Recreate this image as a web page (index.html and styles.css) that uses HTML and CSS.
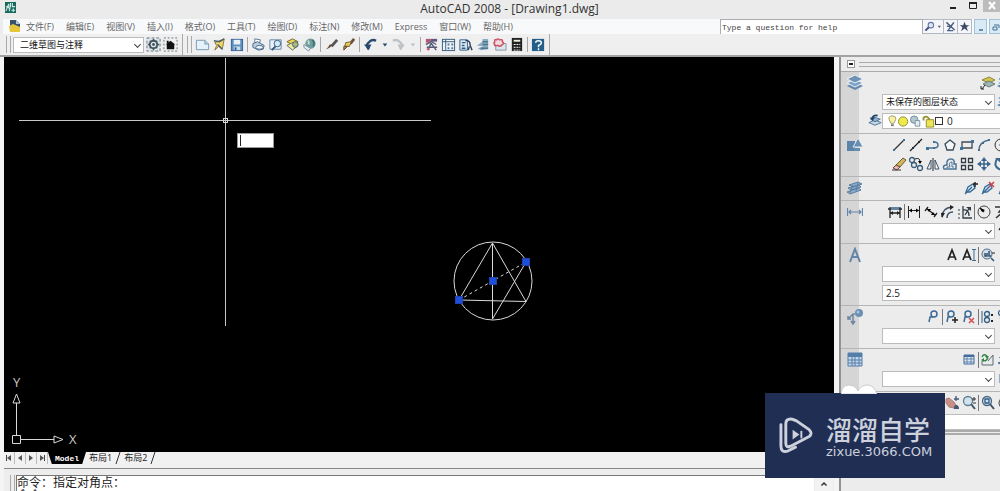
FILE: index.html
```html
<!DOCTYPE html>
<html lang="zh-CN">
<head>
<meta charset="utf-8">
<title>AutoCAD 2008 - [Drawing1.dwg]</title>
<link rel="stylesheet" href="styles.css">
</head>
<body>
<svg class="defs" aria-hidden="true">
  <symbol id="gear" viewBox="0 0 16 16"><rect x="1" y="1" width="14" height="14" fill="#dde6ea" stroke="#64747c" stroke-dasharray="3 2"/><circle cx="8" cy="8" r="4" fill="none" stroke="#40525e" stroke-width="2"/><circle cx="8" cy="8" r="1.5" fill="#40525e"/><path d="M8 2v2M8 12v2M2 8h2M12 8h2M4 4l1 1M11 11l1 1M12 4l-1 1M4 12l1-1" stroke="#40525e" stroke-width="1.5"/></symbol>
  <symbol id="home" viewBox="0 0 16 16"><rect x="1" y="1" width="14" height="14" fill="none" stroke="#64747c" stroke-dasharray="2 2"/><path d="M3 8L8 4L13 8H12V13H4V8Z" fill="#111"/><path d="M4 4h2v3H4z" fill="#111"/></symbol>
  <symbol id="new" viewBox="0 0 16 16"><path d="M1.500 3.500H10.500L14.500 7.500V13.500H1.500Z" fill="#e6f2fa" stroke="#7899b4"/><path d="M10.500 3.500V7.500H14.500" fill="#bcd2e2" stroke="#7899b4"/></symbol>
  <symbol id="open" viewBox="0 0 16 16"><path d="M3 6L13 2L11 13L7 10L3 14L5 9Z" fill="#f0d66a" stroke="#8b7430"/><path d="M2 4L8 5L13 2M6 8L11 13" fill="none" stroke="#48616f" stroke-width="1.500"/></symbol>
  <symbol id="save" viewBox="0 0 16 16"><rect x="2.500" y="2.500" width="12" height="12" fill="#5d8fc1" stroke="#345f91"/><rect x="5" y="3" width="7" height="5" fill="#e6f1f8"/><path d="M5 10h7v4H5z" fill="#c6dcec"/><path d="M6 11h2v3H6z" fill="#345f91"/></symbol>
  <symbol id="print" viewBox="0 0 16 16"><path d="M4 2L10 3L9 7L4 6Z" fill="#fff" stroke="#577797"/><path d="M2 7L7 5L14 9L13 13L8 14L2 11Z" fill="#bdcedc" stroke="#46688b"/><ellipse cx="9" cy="11" rx="4" ry="2" fill="#eef5fa" stroke="#46688b"/></symbol>
  <symbol id="preview" viewBox="0 0 16 16"><path d="M2 3h12v10H2z" fill="#e9f2f8" stroke="#6284a5"/><circle cx="10" cy="7" r="3.500" fill="#d0e8f8" stroke="#38597b"/><path d="M8 10L4 14" stroke="#38597b" stroke-width="2"/></symbol>
  <symbol id="publish" viewBox="0 0 16 16"><path d="M2 5L8 2L14 5L9 9Z" fill="#ead450" stroke="#746428"/><path d="M2 9L8 6L14 9L8 14Z" fill="#f0e6a6" stroke="#5f6d55"/><circle cx="11" cy="8" r="3" fill="#aab97d" stroke="#425e71"/></symbol>
  <symbol id="globe" viewBox="0 0 16 16"><circle cx="9" cy="7" r="5.500" fill="#6d9d9d"/><path d="M6 4Q8 5 7 8" stroke="#c2dbc8" fill="none" stroke-width="2"/><path d="M11 3Q14 6 12 10" stroke="#3f7477" fill="none" stroke-width="2"/><path d="M2 8L9 12L7 15L2 11Z" fill="#e8eff3" stroke="#7990a0"/></symbol>
  <symbol id="brush" viewBox="0 0 16 16"><path d="M14 3L8 10" stroke="#555" stroke-width="3"/><path d="M9 8Q7 12 2 13Q5 11 6 8Z" fill="#684b32"/></symbol>
  <symbol id="match" viewBox="0 0 16 16"><path d="M14 2L10 7" stroke="#6b533a" stroke-width="3"/><path d="M5 6L11 5L9 10L4 10Z" fill="#eac957" stroke="#735d2e"/><path d="M3 10L7 10L3 14Z" fill="#b58c31" stroke="#60502c"/></symbol>
  <symbol id="undo" viewBox="0 0 16 16"><path d="M6 13Q2 8 7 5Q10 2 14 4" fill="none" stroke="currentColor" stroke-width="2.500"/><path d="M1 8L9 8L6 14Z" fill="currentColor"/></symbol>
  <symbol id="redo" viewBox="0 0 16 16"><path d="M10 13Q14 8 9 5Q6 2 2 4" fill="none" stroke="currentColor" stroke-width="2.500"/><path d="M15 8L7 8L10 14Z" fill="currentColor"/></symbol>
  <symbol id="down" viewBox="0 0 8 16"><path d="M2 7h5L4.500 10Z" fill="currentColor"/></symbol>
  <symbol id="props" viewBox="0 0 16 16"><path d="M2 2h5v4H2z" fill="#b65575"/><path d="M7 2h7v3H7z" fill="#625580"/><path d="M2 8L8 5L13 8M8 6L4 14M8 7L13 14M3 11H14" fill="none" stroke="#555c76" stroke-width="1.500"/><path d="M3 13h3" stroke="#cf5b73" stroke-width="2"/></symbol>
  <symbol id="design" viewBox="0 0 16 16"><rect x="1.500" y="2.500" width="13" height="12" fill="#edf4f7" stroke="#365b7c"/><path d="M1 5h14M5 3v11" stroke="#365b7c"/><path d="M7 7h2v2H7zM11 7h2v2h-2zM7 11h2v2H7zM11 11h2v2h-2zM2 7h2M2 10h2" fill="#52799a"/></symbol>
  <symbol id="tool" viewBox="0 0 16 16"><path d="M2 3h8v11H2z" fill="#e1edf5" stroke="#315b86"/><path d="M4 6h4M4 9h3M4 12h4" stroke="#315b86" stroke-width="1.500"/><path d="M8 4Q13 3 13 9L15 14M12 10L11 14" stroke="#263f5e" stroke-width="1.500" fill="none"/></symbol>
  <symbol id="sheet" viewBox="0 0 16 16"><path d="M2 9L8 5V2H14V13L6 14L3 12L9 10Z" fill="#8bacc3"/><path d="M8 5h6M8 8h6M6 12h8" stroke="#537791" stroke-width="1.500"/></symbol>
  <symbol id="markup" viewBox="0 0 16 16"><path d="M4 7h11v7H4z" fill="#dce5eb" stroke="#8195a6"/><path d="M3 5Q2 2 5 3Q6 1 8 3Q12 2 11 5Q14 7 11 8Q9 11 6 9Q2 10 3 8Q1 7 3 5Z" fill="#f3d9de" stroke="#cb4e62" stroke-width="1.500"/></symbol>
  <symbol id="calc" viewBox="0 0 16 16"><rect x="3" y="1" width="11" height="14" fill="#222"/><path d="M5 3h7v2H5z" fill="#edf0df"/><path d="M5 8h7M5 11h7M5 14h7" stroke="#fff" stroke-dasharray="2 1"/></symbol>
  <symbol id="help" viewBox="0 0 16 16"><rect x="1" y="2" width="13" height="13" fill="#245e8a"/><path d="M5 6Q5 4 8 4Q11 4 11 6Q11 8 8 9V11M8 12v2" stroke="#fff" stroke-width="1.500" fill="none"/></symbol>
  <symbol id="search" viewBox="0 0 16 16"><circle cx="10" cy="6" r="4" fill="#dce7f4" stroke="#6675a0" stroke-width="1.500"/><path d="M7 9L2 14" stroke="#475483" stroke-width="3"/></symbol>
  <symbol id="comm" viewBox="0 0 16 16"><path d="M2 2L14 13M13 2L5 13M3 7Q8 10 12 3M3 14H12" fill="none" stroke="#4b5d82" stroke-width="2"/></symbol>
  <symbol id="star" viewBox="0 0 16 16"><path d="M8 1L10 6H15L11 9L13 15L8 11L3 15L5 9L1 6H6Z" fill="#3d4867"/></symbol>
  <symbol id="layers" viewBox="0 0 16 16"><path d="M0 11L8 7L16 11L8 15Z" fill="#6489ad"/><path d="M0 8L8 4L16 8L8 12Z" fill="#7da3c4" stroke="#edf2f6"/><path d="M0 4L8 0L16 4L8 8Z" fill="#6f93b5" stroke="#edf2f6"/></symbol>
  <symbol id="layeredit" viewBox="0 0 16 16"><path d="M2 5L9 2L15 5L9 8Z" fill="#d9c44a" stroke="#888747"/><path d="M3 9L9 6L15 9L9 12Z" fill="#9eb5b6" stroke="#648078"/><path d="M5 10L2 14M1 11V14H4" stroke="#222" fill="none"/></symbol>
  <symbol id="layerprev" viewBox="0 0 16 16"><path d="M1 11L8 8L15 11L8 14Z" fill="#c2d7e6" stroke="#426b91"/><path d="M3 7L8 5L14 7L8 10Z" fill="#94b4ce" stroke="#426b91"/><path d="M5 7Q5 2 11 3" fill="none" stroke="#234469" stroke-width="2"/><path d="M2 5H8L5 9Z" fill="#234469"/></symbol>
  <symbol id="shapes" viewBox="0 0 16 16"><path d="M0 4h8v10H0z" fill="#5c83aa"/><path d="M11 1L16 10H6Z" fill="#688eb5" stroke="#e5e8eb"/><path d="M7 11h6v3H7z" fill="#678dae"/></symbol>
  <symbol id="line" viewBox="0 0 16 16"><path d="M3 13L13 3" stroke="#333" stroke-width="1.300"/><path d="M2 12h2v2H2zM12 2h2v2h-2z" fill="#3b719b"/></symbol>
  <symbol id="xline" viewBox="0 0 16 16"><path d="M2 14L14 2" stroke="#222" stroke-width="1.300"/><path d="M4 10h2v2H4zM10 4h2v2h-2z" fill="#234"/></symbol>
  <symbol id="pline" viewBox="0 0 16 16"><path d="M2 11H9Q13 11 13 8Q13 5 9 5" fill="none" stroke="#4d7290" stroke-width="1.500"/><path d="M1 10h3v3H1zM8 10h2v2H8zM8 4h2v2H8z" fill="#3b719b"/></symbol>
  <symbol id="poly" viewBox="0 0 16 16"><path d="M8 3L13 7L11 13H5L3 7Z" fill="#f6f6f6" stroke="#384b5c" stroke-width="1.300"/></symbol>
  <symbol id="rect" viewBox="0 0 16 16"><path d="M3 5H13V11H3Z" fill="none" stroke="#404b56" stroke-width="1.300"/><path d="M1 10h3v3H1zM12 3h3v3h-3z" fill="#3b719b"/></symbol>
  <symbol id="arc" viewBox="0 0 16 16"><path d="M3 13Q3 5 13 3" fill="none" stroke="#4c6b84" stroke-width="1.500"/><path d="M2 12h2v2H2zM6 5h2v2H6zM12 2h2v2h-2z" fill="#3b719b"/></symbol>
  <symbol id="circle" viewBox="0 0 16 16"><circle cx="8" cy="8" r="6" fill="none" stroke="#333"/><path d="M8 8L12 4M7 7h2v2H7z" stroke="#3b719b"/></symbol>
  <symbol id="erase" viewBox="0 0 16 16"><path d="M12 2L15 4L9 11L5 9Z" fill="#d7b64d" stroke="#665b45"/><path d="M5 9L9 11L6 14L2 12Z" fill="#efb4a7" stroke="#654c47"/><path d="M1 14H10" stroke="#333"/></symbol>
  <symbol id="copy" viewBox="0 0 16 16"><circle cx="4" cy="4" r="2.500" fill="none" stroke="#385d7b" stroke-width="1.300"/><circle cx="6" cy="9" r="2.500" fill="none" stroke="#385d7b" stroke-width="1.300"/><circle cx="12" cy="12" r="2.500" fill="none" stroke="#385d7b" stroke-width="1.300"/><path d="M7 3Q12 1 12 6" stroke="#222" fill="none"/><path d="M10 5h4l-2 3z"/></symbol>
  <symbol id="mirror" viewBox="0 0 16 16"><path d="M6 4V13H2ZM10 4V13H14Z" fill="#f5f5f5" stroke="#3b5368"/><path d="M8 2V15" stroke="#222"/></symbol>
  <symbol id="offset" viewBox="0 0 16 16"><path d="M2 13Q0 9 5 9Q4 3 9 3Q13 3 12 8H14V13Z" fill="none" stroke="#4b7597" stroke-width="1.500"/><path d="M5 12V11H8Q6 6 10 6V11H12" fill="none" stroke="#4b7597"/></symbol>
  <symbol id="array" viewBox="0 0 16 16"><path d="M2.500 2.500h4v4h-4zM9.500 2.500h4v4h-4zM2.500 9.500h4v4h-4zM9.500 9.500h4v4h-4z" fill="#f5f5f5" stroke="#303b46" stroke-width="1.300"/></symbol>
  <symbol id="move" viewBox="0 0 16 16"><path d="M8 3V13M3 8H13" stroke="#3d678d" stroke-width="1.500"/><path d="M8 1L11 5H5ZM8 15L5 11H11ZM1 8L5 5V11ZM15 8L11 11V5Z" fill="#3d678d"/></symbol>
  <symbol id="rotate" viewBox="0 0 16 16"><path d="M4 3Q0 10 6 13Q12 15 13 9" fill="none" stroke="#3d678d" stroke-width="2"/><path d="M2 2H8V7Z" fill="#3d678d"/></symbol>
  <symbol id="block" viewBox="0 0 16 16"><path d="M2 5L11 2L15 4L6 7ZM1 8L12 5L14 7L4 10ZM0 12L11 8L14 10L3 14Z" fill="#8eacc7" stroke="#5a7ea2"/><path d="M6 5L3 13M11 3L9 11" stroke="#5a7ea2" fill="none"/></symbol>
  <symbol id="attadd" viewBox="0 0 16 16"><path d="M3 12L5 7L10 4L12 8L7 12Z" fill="#d9e9f4" stroke="#376b96" stroke-width="1.300"/><path d="M2 14L9 7" stroke="#376b96" stroke-width="1.500"/><path d="M12 2V7M10 4H15" stroke="#222" stroke-width="1.500"/></symbol>
  <symbol id="attdel" viewBox="0 0 16 16"><path d="M3 12L5 7L10 4L12 8L7 12Z" fill="#d9e9f4" stroke="#376b96" stroke-width="1.300"/><path d="M2 14L9 7" stroke="#376b96" stroke-width="1.500"/><path d="M9 2L14 7M14 2L9 7" stroke="#c74048" stroke-width="1.500"/></symbol>
  <symbol id="dimwide" viewBox="0 0 16 16"><path d="M.5 4V12M15.500 4V12M2 8H14M4 6L2 8L4 10M12 6L14 8L12 10" fill="none" stroke="#6186a7" stroke-width="1.200"/></symbol>
  <symbol id="dimquick" viewBox="0 0 16 16"><path d="M3 3V14M13 3V14M1 5H15M3 9H13" stroke="#222" stroke-width="1.300"/><path d="M4 3h8v3H4z" fill="#5f84a4"/><path d="M6 7L3 9L6 11M10 7L13 9L10 11" fill="#222"/></symbol>
  <symbol id="dimlin" viewBox="0 0 16 16"><path d="M2.500 2V14M13.500 2V14M3 6.500H13" stroke="#222"/><path d="M3 6.500L6 4.500V8.500ZM13 6.500L10 4.500V8.500Z"/></symbol>
  <symbol id="dimali" viewBox="0 0 16 16"><path d="M4 5L12 11M5 3L2 7M14 9L11 13" stroke="#222" stroke-width="1.300"/><path d="M4 5L8 5L6 8ZM12 11L8 11L10 8Z"/></symbol>
  <symbol id="dimarc" viewBox="0 0 16 16"><path d="M2 13Q2 4 12 3M7 14Q7 8 13 8" fill="none" stroke="#3b5267" stroke-width="1.500"/><path d="M10 1L14 3L10 6ZM1 9H5L2 14Z" fill="#222"/></symbol>
  <symbol id="dimord" viewBox="0 0 16 16"><path d="M6 2V14H15M6 6Q12 5 12 12M13 3L8 11" fill="none" stroke="#303b45" stroke-width="1.300"/><path d="M9 3h5v4z" fill="#303b45"/><path d="M1 6h2M1 10h2M1 14h2" stroke="#303b45"/></symbol>
  <symbol id="dimrad" viewBox="0 0 16 16"><circle cx="8" cy="8" r="6" fill="none" stroke="#444"/><path d="M8 8L4 4" stroke="#222" stroke-width="1.500"/><path d="M4 4L9 6L6 8Z"/></symbol>
  <symbol id="dimjog" viewBox="0 0 16 16"><path d="M2 3H10L6 8H10L3 14" fill="none" stroke="#333" stroke-width="1.500"/></symbol>
  <symbol id="bigA" viewBox="0 0 16 16"><path d="M3 15L8 2L13 15M5 10H11" fill="none" stroke="#6186a7" stroke-width="2"/></symbol>
  <symbol id="textA" viewBox="0 0 16 16"><path d="M4 13L8 3L12 13M5 10H11" fill="none" stroke="#222" stroke-width="1.700"/></symbol>
  <symbol id="textI" viewBox="0 0 16 16"><path d="M2 13L6 3L10 13M3 10H9" fill="none" stroke="#222" stroke-width="1.700"/><path d="M11 2.500H15M13 3V14M11 13.500H15" stroke="#3b6c94"/></symbol>
  <symbol id="find" viewBox="0 0 16 16"><circle cx="7" cy="7" r="5" fill="#d2dfeb" stroke="#526b84"/><path d="M5 6v3h2V6M9 4v5h2M11 11L14 14" fill="none" stroke="#34506b" stroke-width="1.500"/><path d="M12 6h3" stroke="#222"/></symbol>
  <symbol id="leaderbig" viewBox="0 0 16 16"><circle cx="12" cy="4" r="4" fill="#6b90b3"/><circle cx="11" cy="3" r="1.500" fill="#a8c3db"/><path d="M8 5H6L1 10M6 6V15M4 12L6 15L8 12M1 7V10H4" fill="none" stroke="#6b87a1" stroke-width="1.500"/></symbol>
  <symbol id="leader" viewBox="0 0 16 16"><circle cx="9" cy="5" r="3" fill="none" stroke="#3b6b95" stroke-width="1.500"/><path d="M8 8H5L4 13" fill="none" stroke="#3b6b95" stroke-width="1.500"/></symbol>
  <symbol id="leadadd" viewBox="0 0 16 16"><circle cx="7" cy="5" r="3" fill="none" stroke="#3b6b95" stroke-width="1.500"/><path d="M6 8H4L3 13" fill="none" stroke="#3b6b95" stroke-width="1.500"/><path d="M11 8V14M8 11H14" stroke="#222" stroke-width="1.500"/></symbol>
  <symbol id="leaddel" viewBox="0 0 16 16"><circle cx="7" cy="5" r="3" fill="none" stroke="#3b6b95" stroke-width="1.500"/><path d="M6 8H4L3 13" fill="none" stroke="#3b6b95" stroke-width="1.500"/><path d="M8 9L13 14M13 9L8 14" stroke="#d04f59" stroke-width="1.500"/></symbol>
  <symbol id="leadalign" viewBox="0 0 16 16"><path d="M2 2V14" stroke="#315f87"/><circle cx="7" cy="5" r="2.500" fill="none" stroke="#315f87" stroke-width="1.300"/><circle cx="7" cy="11" r="2.500" fill="none" stroke="#315f87" stroke-width="1.300"/><path d="M11 6h2M11 12h2" stroke="#222" stroke-width="2"/></symbol>
  <symbol id="table" viewBox="0 0 16 16"><path d="M1 1H15V14H1Z" fill="#c6d8e7" stroke="#547fa9"/><path d="M1 3H15" stroke="#547fa9" stroke-width="4"/><path d="M1 8H15M1 11H15M5 2V14M8 2V14M12 2V14" stroke="#547fa9"/></symbol>
  <symbol id="tablesm" viewBox="0 0 16 16"><path d="M3 3H13V12H3Z" fill="#e4edf5" stroke="#406b9b"/><path d="M3 4H13" stroke="#406b9b" stroke-width="2"/><path d="M3 7H13M3 10H13M6 4V12M10 4V12" stroke="#6086ad"/></symbol>
  <symbol id="update" viewBox="0 0 16 16"><path d="M2 9V13H13V3L8 9" fill="#e8ebec" stroke="#596b72"/><path d="M2 5Q4 1 7 4M8 6Q6 10 3 8" fill="none" stroke="#328446" stroke-width="1.500"/><path d="M5 4h4l-2 3zM1 8L4 6V10Z" fill="#328446"/></symbol>
  <symbol id="pan" viewBox="0 0 16 16"><path d="M2 4L5 3L10 7L12 10L10 13L5 12L2 8Z" fill="#c98f84" stroke="#a8807b"/><path d="M12 1V6M10 4H15" stroke="#455671" stroke-width="1.300"/><path d="M10 13Q10 10 12 10Q15 10 15 14H10Z" fill="#455671"/></symbol>
  <symbol id="zoomrt" viewBox="0 0 16 16"><circle cx="7" cy="6" r="4.500" fill="#d2e3ed" stroke="#617f94" stroke-width="1.300"/><path d="M10 9L14 14" stroke="#3a5368" stroke-width="2"/><path d="M11 4H15M13 2V6M12 8H15" stroke="#333"/></symbol>
  <symbol id="zoomwin" viewBox="0 0 16 16"><circle cx="7" cy="6" r="4.500" fill="#d2e3ed" stroke="#49667e" stroke-width="1.300"/><path d="M5 4h4v4H5z" fill="none" stroke="#315985" stroke-width="1.300"/><path d="M10 9L14 14" stroke="#3a5368" stroke-width="2"/></symbol>
</svg>

<header class="titlebar">
  <svg class="app-logo" viewBox="0 0 12 12"><path d="M0 0h12v12H0z" fill="#17695f"/><path d="M1 10L4 2L5 10M6 1V6M8 1V5H11M7 9H11M9 7V11M1 5L6 7" fill="none" stroke="#cfece1" stroke-width="1.200"/></svg>
  <h1>AutoCAD 2008 - [Drawing1.dwg]</h1>
  <div class="window-buttons">
    <button aria-label="最小化"><svg viewBox="0 0 10 10"><path d="M2 7H8" stroke="#222" stroke-width="2"/></svg></button>
    <button aria-label="最大化"><svg viewBox="0 0 10 10"><path d="M1.500 2.500H8.500V7.500H1.500Z" fill="none" stroke="#222"/><path d="M1 2H9" stroke="#222" stroke-width="2"/></svg></button>
    <button class="close" aria-label="关闭"><svg viewBox="0 0 10 10"><path d="M2 1L8 8M8 1L2 8" stroke="#fff" stroke-width="2"/></svg></button>
  </div>
</header>

<div class="menubar">
  <svg class="doc-icon" viewBox="0 0 12 14"><path d="M1 1H7L11 5V12H1Z" fill="#38536a"/><path d="M0 7L4 5L11 8V13H1Z" fill="#e6c63c"/><path d="M7 1V5H11Z" fill="#b8cad6"/></svg>
  <nav>
    <button>文件(F)</button><button>编辑(E)</button><button>视图(V)</button><button>插入(I)</button><button>格式(O)</button><button>工具(T)</button><button>绘图(D)</button><button>标注(N)</button><button>修改(M)</button><button>Express</button><button>窗口(W)</button><button>帮助(H)</button>
  </nav>
  <div class="infocenter">
    <input type="text" placeholder="Type a question for help" aria-label="Type a question for help">
    <button class="find" aria-label="搜索"><svg class="i12"><use href="#search"/></svg><svg class="drop"><use href="#down"/></svg></button>
    <button aria-label="通讯中心"><svg class="i12"><use href="#comm"/></svg></button>
    <button aria-label="收藏夹"><svg class="i12"><use href="#star"/></svg></button>
  </div>
  <div class="doc-buttons">
    <button aria-label="最小化图形"><svg viewBox="0 0 10 10"><path d="M3 8H7" stroke="#456f92" stroke-width="1.500"/></svg></button>
    <button aria-label="还原图形"><svg viewBox="0 0 10 10"><path d="M3 3H8V6M2 5H6V8H2Z" fill="none" stroke="#456f92"/></svg></button>
  </div>
</div>

<div class="toolbar">
  <div class="band workspace">
    <i class="grip"></i>
    <span class="combo"><select aria-label="工作空间"><option>二维草图与注释</option></select></span>
    <button aria-label="工作空间设置"><svg><use href="#gear"/></svg></button>
    <button aria-label="我的工作空间"><svg><use href="#home"/></svg></button>
  </div>
  <div class="band standard">
    <i class="grip"></i>
    <button aria-label="新建"><svg><use href="#new"/></svg></button>
    <button aria-label="打开"><svg><use href="#open"/></svg></button>
    <button aria-label="保存"><svg><use href="#save"/></svg></button>
    <i class="sep"></i>
    <button aria-label="打印"><svg><use href="#print"/></svg></button>
    <button aria-label="打印预览"><svg><use href="#preview"/></svg></button>
    <button aria-label="发布"><svg><use href="#publish"/></svg></button>
    <button aria-label="三维 DWF"><svg><use href="#globe"/></svg></button>
    <i class="sep"></i>
    <button aria-label="特性匹配"><svg><use href="#brush"/></svg></button>
    <button aria-label="块编辑器"><svg><use href="#match"/></svg></button>
    <i class="sep"></i>
    <button class="undo" aria-label="放弃"><svg><use href="#undo"/></svg></button>
    <button class="arrow undo" aria-label="放弃列表"><svg><use href="#down"/></svg></button>
    <button class="redo" aria-label="重做"><svg><use href="#redo"/></svg></button>
    <button class="arrow redo" aria-label="重做列表"><svg><use href="#down"/></svg></button>
    <i class="sep"></i>
    <button aria-label="特性"><svg><use href="#props"/></svg></button>
    <button aria-label="设计中心"><svg><use href="#design"/></svg></button>
    <button aria-label="工具选项板"><svg><use href="#tool"/></svg></button>
    <button aria-label="图纸集"><svg><use href="#sheet"/></svg></button>
    <button aria-label="标记集"><svg><use href="#markup"/></svg></button>
    <button aria-label="计算器"><svg><use href="#calc"/></svg></button>
    <i class="sep"></i>
    <button aria-label="帮助"><svg><use href="#help"/></svg></button>
  </div>
</div>

<main>
  <section class="workarea">
    <div class="canvas">
      <svg class="drawing" fill="none" stroke="#d8d8d8">
        <path d="M221.500 1V269M15 63.500H427" stroke="#c8c8c8"/>
        <rect x="219.500" y="61.500" width="4" height="4"/>
        <circle cx="489" cy="224" r="39"/>
        <path d="M488.500 186V262M488.500 186L455 243L522 244.500L488.500 186M522 205L488.500 262"/>
        <path d="M455 243L522 205" stroke-dasharray="3 3"/>
        <g fill="#1c4fdc" stroke="#2340a8"><rect x="451.500" y="239.500" width="7" height="7"/><rect x="485.500" y="220.500" width="7" height="7"/><rect x="518.500" y="201.500" width="7" height="7"/></g>
      </svg>
      <svg class="ucs" viewBox="0 0 80 80" fill="none" stroke="#d8d8d8">
        <path d="M12.500 31V63M17 67.500H50M8.500 63.500H16.500V71.500H8.500ZM12.500 22L9 31H16ZM59 67.500L50 64V71Z"/>
        <text x="9" y="15">Y</text><text x="65" y="72">X</text>
      </svg>
      <input class="dynamic-input" type="text" aria-label="动态输入"><i class="caret"></i>
    </div>
    <div class="tabs">
      <button class="step" aria-label="第一个"><svg viewBox="0 0 10 10"><path d="M2.500 2V8" stroke="#444"/><path d="M7 2V8L3 5Z" fill="#555"/></svg></button>
      <button class="step" aria-label="上一个"><svg viewBox="0 0 10 10"><path d="M7 2V8L3 5Z" fill="#555"/></svg></button>
      <button class="step" aria-label="下一个"><svg viewBox="0 0 10 10"><path d="M3 2V8L7 5Z" fill="#555"/></svg></button>
      <button class="step" aria-label="最后一个"><svg viewBox="0 0 10 10"><path d="M7.500 2V8" stroke="#444"/><path d="M3 2V8L7 5Z" fill="#555"/></svg></button>
      <button class="tab model">Model</button>
      <button class="tab">布局1</button>
      <svg class="slash" viewBox="0 0 6 12"><path d="M1 12L5 0" stroke="#333"/></svg>
      <button class="tab">布局2</button>
      <svg class="slash" viewBox="0 0 6 12"><path d="M1 12L5 0" stroke="#333"/></svg>
    </div>
    <div class="command">
      <i class="grip"></i>
      <div class="history"><p>命令：指定对角点：</p><p>命令：</p></div>
      <button class="scroll-up" aria-label="向上滚动"><svg viewBox="0 0 8 8"><path d="M1.500 5.500L4 3L6.500 5.500" fill="none" stroke="#333" stroke-width="1.500"/></svg></button>
    </div>
  </section>

  <aside class="dashboard">
    <div class="dash-head"><button aria-label="折叠"></button><i></i></div>
    <section class="panel">
      <div class="side"><svg><use href="#layers"/></svg></div>
      <div class="rows">
        <div class="icons"><button aria-label="图层特性"><svg><use href="#layeredit"/></svg></button><button aria-label="图层"><svg><use href="#layers"/></svg></button></div>
        <div class="field"><span class="combo"><select aria-label="图层状态"><option>未保存的图层状态</option></select></span><svg><use href="#layers"/></svg></div>
        <div class="field layer"><svg><use href="#layerprev"/></svg>
          <div class="box"><svg class="layer-state" viewBox="0 0 52 14"><path d="M6 1Q2 1 3 5L5 9H8L10 5Q11 1 6 1Z" fill="#f8f1a0" stroke="#9b9870"/><path d="M5 10H8V12H5Z" fill="#777"/><circle cx="18" cy="7" r="5" fill="#f0e94a" stroke="#8b8a3b"/><circle cx="30" cy="5" r="4" fill="#afc9cd" stroke="#6e8b94"/><path d="M31 6H36V12H31Z" fill="#e6edf0" stroke="#7891a0"/><path d="M40 6V3Q43 0 46 4V9" fill="none" stroke="#938f30" stroke-width="2"/><path d="M43 5H51V13H43Z" fill="#ece555" stroke="#918d30"/></svg><i class="swatch"></i><span>0</span></div></div>
      </div>
    </section>
    <section class="panel tight">
      <div class="side"><svg><use href="#shapes"/></svg></div>
      <div class="rows">
        <div class="icons"><button aria-label="直线"><svg><use href="#line"/></svg></button><button aria-label="构造线"><svg><use href="#xline"/></svg></button><button aria-label="多段线"><svg><use href="#pline"/></svg></button><button aria-label="正多边形"><svg><use href="#poly"/></svg></button><button aria-label="矩形"><svg><use href="#rect"/></svg></button><button aria-label="圆弧"><svg><use href="#arc"/></svg></button><button aria-label="圆"><svg><use href="#circle"/></svg></button></div>
        <div class="icons"><button aria-label="删除"><svg><use href="#erase"/></svg></button><button aria-label="复制"><svg><use href="#copy"/></svg></button><button aria-label="镜像"><svg><use href="#mirror"/></svg></button><button aria-label="偏移"><svg><use href="#offset"/></svg></button><button aria-label="阵列"><svg><use href="#array"/></svg></button><button aria-label="移动"><svg><use href="#move"/></svg></button><button aria-label="旋转"><svg><use href="#rotate"/></svg></button></div>
      </div>
    </section>
    <section class="panel">
      <div class="side"><svg><use href="#block"/></svg></div>
      <div class="rows"><div class="icons"><button aria-label="添加注释比例"><svg><use href="#attadd"/></svg></button><button aria-label="删除注释比例"><svg><use href="#attdel"/></svg></button><button aria-label="注释比例"><svg><use href="#attadd"/></svg></button></div></div>
    </section>
    <section class="panel tight">
      <div class="side"><svg><use href="#dimwide"/></svg></div>
      <div class="rows">
        <div class="icons"><button aria-label="快速标注"><svg><use href="#dimquick"/></svg></button><i class="vsep"></i><button aria-label="线性"><svg><use href="#dimlin"/></svg></button><button aria-label="对齐"><svg><use href="#dimali"/></svg></button><button aria-label="弧长"><svg><use href="#dimarc"/></svg></button><button aria-label="坐标"><svg><use href="#dimord"/></svg></button><i class="vsep"></i><button aria-label="半径"><svg><use href="#dimrad"/></svg></button><button aria-label="折弯"><svg><use href="#dimjog"/></svg></button></div>
        <div class="field"><span class="combo"><select aria-label="标注样式"></select></span><svg><use href="#dimali"/></svg></div>
      </div>
    </section>
    <section class="panel">
      <div class="side"><svg><use href="#bigA"/></svg></div>
      <div class="rows">
        <div class="icons"><button aria-label="多行文字"><svg><use href="#textA"/></svg></button><button aria-label="单行文字"><svg><use href="#textI"/></svg></button><i class="vsep"></i><button aria-label="查找"><svg><use href="#find"/></svg></button><button aria-label="文字比例"><svg><use href="#textA"/></svg></button></div>
        <div class="field"><span class="combo"><select aria-label="文字样式"></select></span><svg><use href="#textA"/></svg></div>
        <div class="field"><input class="box" type="text" value="2.5" aria-label="文字高度"></div>
      </div>
    </section>
    <section class="panel">
      <div class="side"><svg><use href="#leaderbig"/></svg></div>
      <div class="rows">
        <div class="icons"><button aria-label="多重引线"><svg><use href="#leader"/></svg></button><i class="vsep"></i><button aria-label="添加引线"><svg><use href="#leadadd"/></svg></button><button aria-label="删除引线"><svg><use href="#leaddel"/></svg></button><i class="vsep"></i><button aria-label="对齐引线"><svg><use href="#leadalign"/></svg></button><button aria-label="合并引线"><svg><use href="#copy"/></svg></button></div>
        <div class="field"><span class="combo"><select aria-label="引线样式"></select></span><svg><use href="#leader"/></svg></div>
      </div>
    </section>
    <section class="panel">
      <div class="side"><svg><use href="#table"/></svg></div>
      <div class="rows">
        <div class="icons"><button aria-label="表格"><svg><use href="#tablesm"/></svg></button><i class="vsep"></i><button aria-label="更新"><svg><use href="#update"/></svg></button><button aria-label="提取"><svg><use href="#layerprev"/></svg></button></div>
        <div class="field"><span class="combo"><select aria-label="表格样式"></select></span><svg><use href="#tablesm"/></svg></div>
      </div>
    </section>
    <section class="panel last">
      <div class="side"></div>
      <div class="rows">
        <div class="icons"><button aria-label="平移"><svg><use href="#pan"/></svg></button><button aria-label="实时缩放"><svg><use href="#zoomrt"/></svg></button><i class="vsep"></i><button aria-label="窗口缩放"><svg><use href="#zoomwin"/></svg></button><button aria-label="缩放"><svg><use href="#dimrad"/></svg></button></div>
        <div class="field"><input class="box" type="text" aria-label="视图"></div>
      </div>
    </section>
  </aside>
</main>

<div class="watermark">
  <svg class="bumps" viewBox="0 0 36 10"><path d="M0 10Q1 1 8 1Q14 1 17 7Q20 1 26 1Q33 1 36 10Z" fill="#fff" stroke="#ccc"/></svg>
  <svg class="play" viewBox="0 0 36 38" fill="none" stroke="#ccd1dc" stroke-width="3" stroke-linecap="round" stroke-linejoin="round"><path d="M12 2Q7 2 7 7V27Q7 32 12 30L31 20Q35 17 31 13L18 4Q14 2 12 2Z"/><path d="M2 8V30Q2 37 9 35L17 31"/><path d="M14 13V23L21 18Z" fill="#ccd1dc" stroke="none"/><path d="M23 15V21" stroke-width="2"/></svg>
  <div><strong>溜溜自学</strong><span>zixue.3066.COM</span></div>
</div>
</body>
</html>
```
FILE: styles.css
```css
* { box-sizing: border-box; }
body {
  margin: 0;
  height: 100vh;
  display: flex;
  flex-direction: column;
  overflow: hidden;
  position: relative;
  background: #ececec;
  color: #222;
  font-family: "Open Sans", "Noto Sans CJK SC", sans-serif;
  font-size: 10px;
}
button, input, select {
  margin: 0;
  padding: 0;
  border: 0;
  border-radius: 0;
  background: none;
  color: inherit;
  font: inherit;
  outline: 0;
}
button { display: flex; align-items: center; justify-content: center; white-space: nowrap; }
svg { display: block; flex: none; }
.defs { position: absolute; width: 0; height: 0; }

.titlebar { display: flex; flex: none; height: 19px; background: #ebebeb; }
.app-logo { width: 11px; height: 11px; margin: 2px 0 0 5px; }
h1 { flex: 1; margin: 0 0 0 20px; text-align: center; font-size: 12px; line-height: 17px; font-weight: 400; color: #333; }
.window-buttons { display: flex; height: 12px; margin-left: -40px; }
.window-buttons button { width: 20px; overflow: hidden; }
.window-buttons svg { width: 10px; height: 10px; }
.window-buttons .close { width: 17px; background: #bcbcbc; }

.menubar { display: flex; flex: none; height: 15px; margin-left: 3px; background: #f8f9fb; color: #666; }
.doc-icon { width: 12px; height: 14px; margin: 0 5px 0 6px; }
nav { display: flex; flex: 1; gap: 12px; font-size: 9px; line-height: 15px; }
.infocenter { display: flex; }
.infocenter input { width: 203px; padding-left: 1px; background: #fff; border: 1px solid #a9adb2; border-bottom: 0; font: 8px "Liberation Mono", monospace; }
.infocenter input::placeholder { color: #444; opacity: 1; }
.infocenter button { width: 14px; border: 1px solid #b3b8c2; border-left: 0; background: #f4f6f9; }
.infocenter .find { width: 21px; gap: 1px; }
.i12 { width: 11px; height: 11px; }
.drop { width: 6px; height: 11px; }
.doc-buttons { display: flex; gap: 2px; margin-left: 2px; width: 26px; overflow: hidden; }
.doc-buttons button { flex: none; width: 13px; background: #d8eaf6; border: 1px solid #a5c2d5; }
.doc-buttons svg { width: 10px; height: 10px; }

.toolbar { display: flex; flex: none; height: 23px; padding-left: 4px; border-bottom: 2px solid #a3a3a3; background: #efefef; }
.band { display: flex; align-items: center; gap: 2px; border-right: 1px solid #aaa; }
.grip { width: 5px; height: 17px; border-left: 1px solid #aaa; border-right: 1px solid #aaa; flex: none; }
.band button { width: 15px; height: 16px; }
.band svg { width: 15px; height: 15px; }
.band .arrow, .band .arrow svg { width: 9px; }
.band .sep { width: 1px; height: 15px; margin: 0 1px; background: #a5a5a5; }
.workspace { padding: 0 4px 0 2px; }
.workspace .combo { width: 131px; }
.standard { padding: 0 3px 0 4px; }
.standard .grip { margin-right: 1px; }
.undo { color: #27496f; }
.redo { color: #bcc2c6; }

.combo { position: relative; flex: none; width: 113px; height: 16px; }
.combo select { appearance: none; display: block; width: 100%; height: 100%; padding: 0 14px 0 3px; background: #fff; border: 1px solid #bbb; font-size: 9px; line-height: 14px; color: #111; }
.workspace select { padding-left: 6px; }
.combo::after { content: ""; position: absolute; right: 4px; top: 5px; width: 4px; height: 4px; border: solid #444; border-width: 0 1px 1px 0; transform: rotate(45deg); }

main { display: flex; flex: 1; min-height: 0; }
.workarea { display: flex; flex: 1; flex-direction: column; min-width: 0; padding: 0 5px 0 4px; background: #f4f4f4; }
.canvas { position: relative; flex: 1; min-height: 0; overflow: hidden; background: #000; }
.drawing { width: 100%; height: 100%; }
.ucs { position: absolute; left: 0; bottom: 0; width: 80px; height: 80px; }
.ucs text { font: 13px "Open Sans", sans-serif; fill: #c8c8c8; stroke: none; }
.dynamic-input { position: absolute; left: 233px; top: 76px; width: 37px; height: 15px; background: #fff; border: 1px solid #999; }
.caret { position: absolute; left: 236px; top: 78px; width: 1px; height: 11px; background: #222; }
.tabs { display: flex; flex: none; height: 12px; align-items: stretch; background: #f1f1f1; font-size: 9px; line-height: 12px; }
.step { width: 11px; border-right: 1px solid #bbb; }
.step svg { width: 10px; height: 10px; }
.tab { padding: 0 3px; color: #222; }
.tab.model { width: 38px; background: #000; color: #fff; font: bold 8px "Liberation Mono", monospace; clip-path: polygon(0 0, 100% 0, 90% 100%, 10% 100%); }
.slash { width: 6px; height: 12px; }
.command { display: flex; flex: none; height: 27px; padding: 11px 0 0 6px; gap: 1px; background: linear-gradient(#f1f1f1 4px, #888 4px, #888 5px, #ededed 5px); }
.history { flex: 1; overflow: hidden; background: #fff; border: 1px solid #777; border-bottom: 0; border-right: 0; font-size: 12px; line-height: 13px; }
.history p { margin: 0; }
.scroll-up { width: 18px; margin-right: 1px; background: #f2f2f2; border-top: 1px solid #777; }
.scroll-up svg { width: 8px; height: 8px; }

.dashboard { width: 161px; flex: none; overflow: hidden; border-left: 2px solid #929292; background: #ececec; }
.dash-head { display: flex; align-items: center; height: 15px; padding-left: 6px; gap: 4px; border-bottom: 1px solid #aaa; }
.dash-head button { width: 8px; height: 8px; border: 1px solid #999; background: linear-gradient(#222, #222) center / 4px 2px no-repeat #fff; }
.dash-head i { flex: 1; height: 5px; border-top: 1px solid #aaa; border-bottom: 1px solid #aaa; }
.panel { display: flex; border-bottom: 1px solid #b5b5b5; }
.side { flex: none; width: 27px; padding: 3px 0 0 6px; background: linear-gradient(to right, #d5d5d5 18px, transparent 18px); }
.side svg { width: 16px; height: 16px; }
.rows { display: flex; flex: 1; flex-direction: column; gap: 3px; min-width: 0; padding: 3px 0 4px; }
.icons { display: flex; justify-content: flex-end; gap: 1px; height: 16px; margin-right: -13px; }
.tight .icons { margin-right: -9px; }
.icons button, .icons svg { flex: none; width: 16px; height: 16px; }
.vsep { width: 1px; background: #777; }
.field { display: flex; gap: 2px; height: 16px; padding-left: 14px; }
.field > svg { width: 16px; height: 16px; }
.field.layer { padding-left: 0; gap: 0; }
.field.layer > svg { width: 14px; height: 14px; }
.box { flex: 1; display: flex; align-items: center; min-width: 0; padding-left: 3px; background: #fff; border: 1px solid #bbb; border-right: 0; }
.layer-state { width: 49px; height: 13px; }
.swatch { width: 8px; height: 8px; border: 1px solid #333; margin-right: 4px; }
.last { border-bottom: 5px double #aaa; }
.last .rows { padding-bottom: 0; }

.watermark { position: absolute; right: 55px; bottom: 13px; width: 180px; height: 85px; display: flex; align-items: center; gap: 12px; padding-left: 14px; background: #202e54; color: #ccd1dc; }
.play { width: 35px; height: 37px; }
.watermark div { display: flex; flex-direction: column; }
.watermark strong { font: 500 26px/32px "Noto Sans CJK SC", sans-serif; }
.watermark span { font: 13px/14px "DejaVu Sans", sans-serif; }
.bumps { position: absolute; left: 76px; top: -9px; width: 36px; height: 10px; }
```
